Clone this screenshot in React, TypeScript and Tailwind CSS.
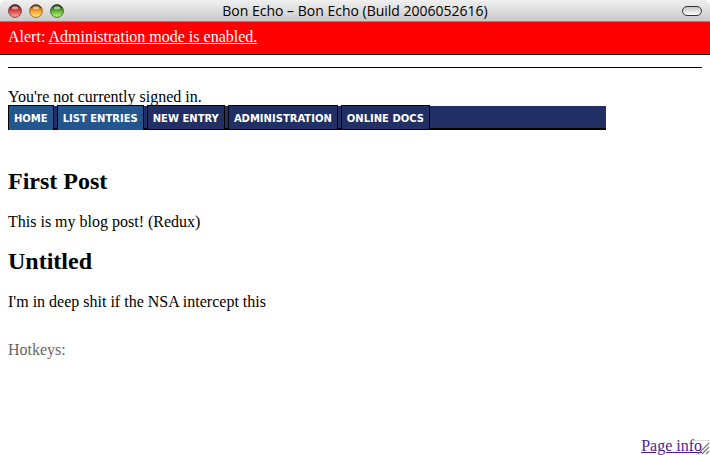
function TrafficLight({ id, label, edge, mid, glow }: { id: string; label: string; edge: string; mid: string; glow: string }) {
  return (
    <button type="button" aria-label={label} className="block size-[14px]">
      <svg viewBox="0 0 14 14" className="block size-[14px]" aria-hidden="true">
        <defs>
          <linearGradient id={id} x1="0" y1="0" x2="0" y2="1">
            <stop offset="0" stopColor={edge} />
            <stop offset="0.45" stopColor={mid} />
            <stop offset="1" stopColor={glow} />
          </linearGradient>
        </defs>
        <circle cx="7" cy="7" r="6.4" fill={`url(#${id})`} stroke={edge} strokeOpacity="0.8" strokeWidth="1" />
        <path d="M2 4.2 A5.9 5.9 0 0 1 12 4.2" fill="none" stroke="#2a2422" strokeOpacity="0.6" strokeWidth="1.4" />
        <ellipse cx="7" cy="3.8" rx="3.2" ry="1.5" fill="#fff" fillOpacity="0.55" />
      </svg>
    </button>
  );
}

const tabs = [
  { label: "HOME", active: true },
  { label: "LIST ENTRIES", active: true },
  { label: "NEW ENTRY", active: false },
  { label: "ADMINISTRATION", active: false },
  { label: "ONLINE DOCS", active: false },
];

const posts = [
  { title: "First Post", body: "This is my blog post! (Redux)" },
  { title: "Untitled", body: "I'm in deep shit if the NSA intercept this" },
];

export default function App() {
  return (
    <div className="relative flex min-h-screen flex-col bg-white font-['Liberation_Serif',serif] text-[16px] leading-[18px] text-black">
      <header className="grid h-[22px] grid-cols-[1fr_auto_1fr] items-center rounded-t-[6px] border-b border-[#8a8a8a] bg-linear-to-b from-[#f0f0f0] via-[#dedede] to-[#c8c8c8] px-2">
        <div className="flex gap-[7px]">
          <TrafficLight id="close" label="Close" edge="#6b2a28" mid="#d2413c" glow="#ffaaa0" />
          <TrafficLight id="minimize" label="Minimize" edge="#84501a" mid="#f0952a" glow="#fff27a" />
          <TrafficLight id="zoom" label="Zoom" edge="#27501a" mid="#54a52c" glow="#c4ff84" />
        </div>
        <h1 className="font-['Open_Sans',sans-serif] text-[14px]">Bon Echo – Bon Echo (Build 2006052616)</h1>
        <button
          type="button"
          aria-label="Toggle toolbar"
          className="h-[10px] w-5 justify-self-end rounded-full border border-[#333] bg-linear-to-b from-[#c4c4c4] to-white"
        />
      </header>

      <div className="border-b border-black bg-[#ff0000] px-2 pt-[6px] pb-2 text-white">
        Alert: <a href="#admin" className="underline">Administration mode is enabled.</a>
      </div>

      <main className="px-2 pt-3">
        <hr className="border-black" />
        <p className="mt-5">You're not currently signed in.</p>
        <nav className="flex h-6 w-[598px] max-w-full items-end gap-[3px] border-b-2 border-black bg-[#212f64] font-['DejaVu_Sans',sans-serif] text-[10px] font-bold text-white">
          {tabs.map((tab) => (
            <a
              key={tab.label}
              href="#"
              className={
                tab.active
                  ? "-mb-[2px] h-[25px] border border-b-0 border-black bg-[#24568e] px-[5px] pt-1"
                  : "-mb-[2px] h-[25px] border border-black bg-[#212f64] px-[5px] pt-1"
              }
            >
              {tab.label}
            </a>
          ))}
        </nav>
        <div className="mt-[37px] flex flex-col gap-4">
          {posts.map((post) => (
            <article key={post.title}>
              <h2 className="text-[24px] leading-7 font-bold">{post.title}</h2>
              <p className="mt-[18px]">{post.body}</p>
            </article>
          ))}
        </div>
        <p className="mt-[30px] text-[#666]">Hotkeys:</p>
      </main>

      <footer className="mt-auto px-2 text-right">
        <a href="#info" className="text-[#551a8b] underline">Page info</a>
      </footer>
      <svg viewBox="0 0 15 15" className="absolute right-0 bottom-0 size-[15px]" aria-hidden="true">
        <path d="M0 0.5 H15" stroke="#ddd" strokeWidth="1" />
        <path d="M3 14 L14 3 M7 14 L14 7 M11 14 L14 11" stroke="#777" strokeWidth="1.2" />
      </svg>
    </div>
  );
}
